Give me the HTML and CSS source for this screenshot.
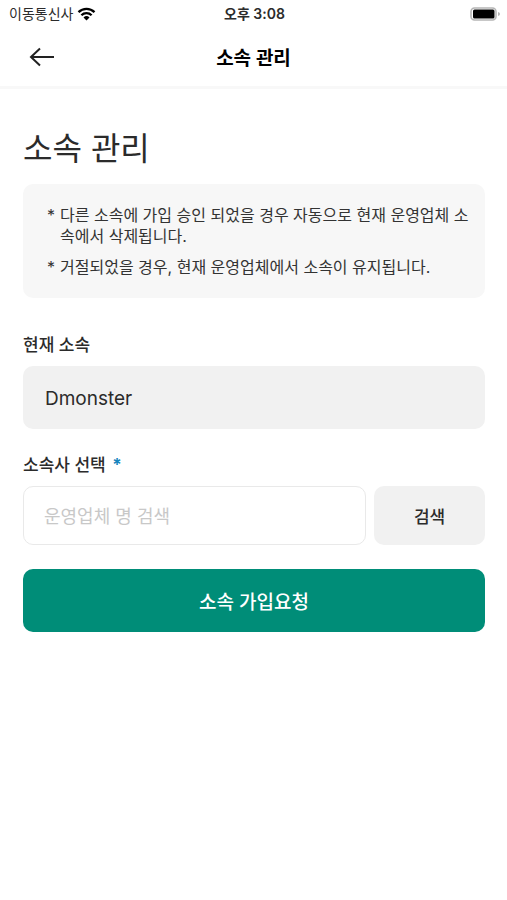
FILE: index.html
```html
<!DOCTYPE html>
<html lang="ko">
<head>
<meta charset="utf-8">
<meta name="viewport" content="width=device-width, initial-scale=1">
<title>소속 관리</title>
<link rel="stylesheet" href="styles.css">
</head>
<body>
<div class="status">
  <div class="status-left">
    <span>이동통신사</span>
    <svg class="wifi" viewBox="0 0 18 14" aria-hidden="true">
      <path d="M1 5.2a11.5 11.5 0 0 1 16 0M3.9 8.2a7.3 7.3 0 0 1 10.2 0" fill="none" stroke="#000" stroke-width="2.3"/>
      <path d="M6 10.4a4.3 4.3 0 0 1 6 0L9 13.4z"/>
    </svg>
  </div>
  <time class="status-time">오후 3:08</time>
  <svg class="battery" viewBox="0 0 30 14" aria-hidden="true">
    <rect x="1" y="1" width="25" height="12" rx="3.5" fill="#fff" stroke="#b5b5b5" stroke-width="1.6"/>
    <rect x="3" y="2.6" width="21.5" height="8.8" rx="1.5"/>
    <path d="M28 5v4q2-.6 2-2t-2-2z" fill="#b5b5b5"/>
  </svg>
</div>
<header class="topbar">
  <button class="back" type="button" aria-label="뒤로">
    <svg viewBox="0 0 26 20" aria-hidden="true"><path d="M25 10H2M11 1.5 2 10l9 8.5" fill="none" stroke="#222" stroke-width="2"/></svg>
  </button>
  <div class="topbar-title">소속 관리</div>
</header>
<main class="content">
  <h1>소속 관리</h1>
  <ul class="notice">
    <li>다른 소속에 가입 승인 되었을 경우 자동으로 현재 운영업체 소속에서 삭제됩니다.</li>
    <li>거절되었을 경우, 현재 운영업체에서 소속이 유지됩니다.</li>
  </ul>
  <form>
    <label for="current">현재 소속</label>
    <input class="current" id="current" type="text" value="Dmonster" readonly>
    <label for="company">소속사 선택 <span class="required">*</span></label>
    <div class="search">
      <input id="company" type="text" placeholder="운영업체 명 검색">
      <button class="search-button" type="button">검색</button>
    </div>
    <button class="submit" type="button">소속 가입요청</button>
  </form>
</main>
</body>
</html>
```
FILE: styles.css
```css
* {
  box-sizing: border-box;
}

body {
  margin: 0;
  background: #fff;
  color: #2b2b2b;
  font-family: Inter, "Noto Sans CJK KR", sans-serif;
}

button,
input {
  margin: 0;
  border: 0;
  border-radius: 10px;
  color: inherit;
  font-family: inherit;
}

.status {
  display: grid;
  grid-template-columns: 1fr auto 1fr;
  align-items: center;
  height: 27px;
  padding: 0 7px 0 9px;
  font-size: 14px;
  line-height: 27px;
}

.status-left {
  display: flex;
  align-items: center;
  gap: 4px;
}

.wifi {
  width: 19px;
  height: 14px;
}

.status-time {
  font-weight: 600;
}

.battery {
  justify-self: end;
  width: 30px;
  height: 14px;
}

.topbar {
  display: grid;
  grid-template-columns: 1fr auto 1fr;
  align-items: center;
  height: 62px;
  padding: 0 24px;
  border-bottom: 3px solid #f8f8f8;
}

.back {
  display: flex;
  justify-self: start;
  padding: 5px;
  background: none;
}

.back svg {
  width: 26px;
  height: 20px;
}

.topbar-title {
  color: #000;
  font-size: 19px;
  font-weight: 600;
}

.content {
  padding: 36px 22px 24px 23px;
}

h1 {
  margin: 0 0 11px;
  font-size: 32px;
  font-weight: 400;
  line-height: 48px;
}

.notice {
  margin: 0 0 35px;
  padding: 21px 14px 20px 24px;
  border-radius: 10px;
  background: #f7f7f7;
  color: #333;
  list-style: none;
  font-size: 16px;
  line-height: 21px;
}

.notice li {
  display: flex;
  gap: 5px;
  word-break: break-all;
}

.notice li::before {
  content: "*";
}

.notice li + li {
  margin-top: 10px;
}

label {
  display: block;
  margin-bottom: 9px;
  font-size: 17px;
  font-weight: 500;
  line-height: 24px;
}

.required {
  margin-left: 2px;
  color: #1585bd;
  font-weight: 700;
}

.current {
  display: block;
  width: 100%;
  height: 63px;
  margin-bottom: 24px;
  padding: 2px 22px 0;
  background: #f1f1f1;
  font-size: 19px;
}

.search {
  display: flex;
  gap: 8px;
  margin-bottom: 24px;
}

.search input {
  flex: 1;
  min-width: 0;
  height: 59px;
  padding: 2px 20px 0;
  border: 1px solid #e9e9e9;
  font-size: 18px;
}

.search input::placeholder {
  color: #c8c8c8;
}

.search-button {
  flex: 0 0 24%;
  background: #f1f1f1;
  font-size: 17px;
  font-weight: 500;
}

.submit {
  width: 100%;
  height: 63px;
  background: #008d78;
  color: #fff;
  font-size: 19px;
  font-weight: 500;
}
```
